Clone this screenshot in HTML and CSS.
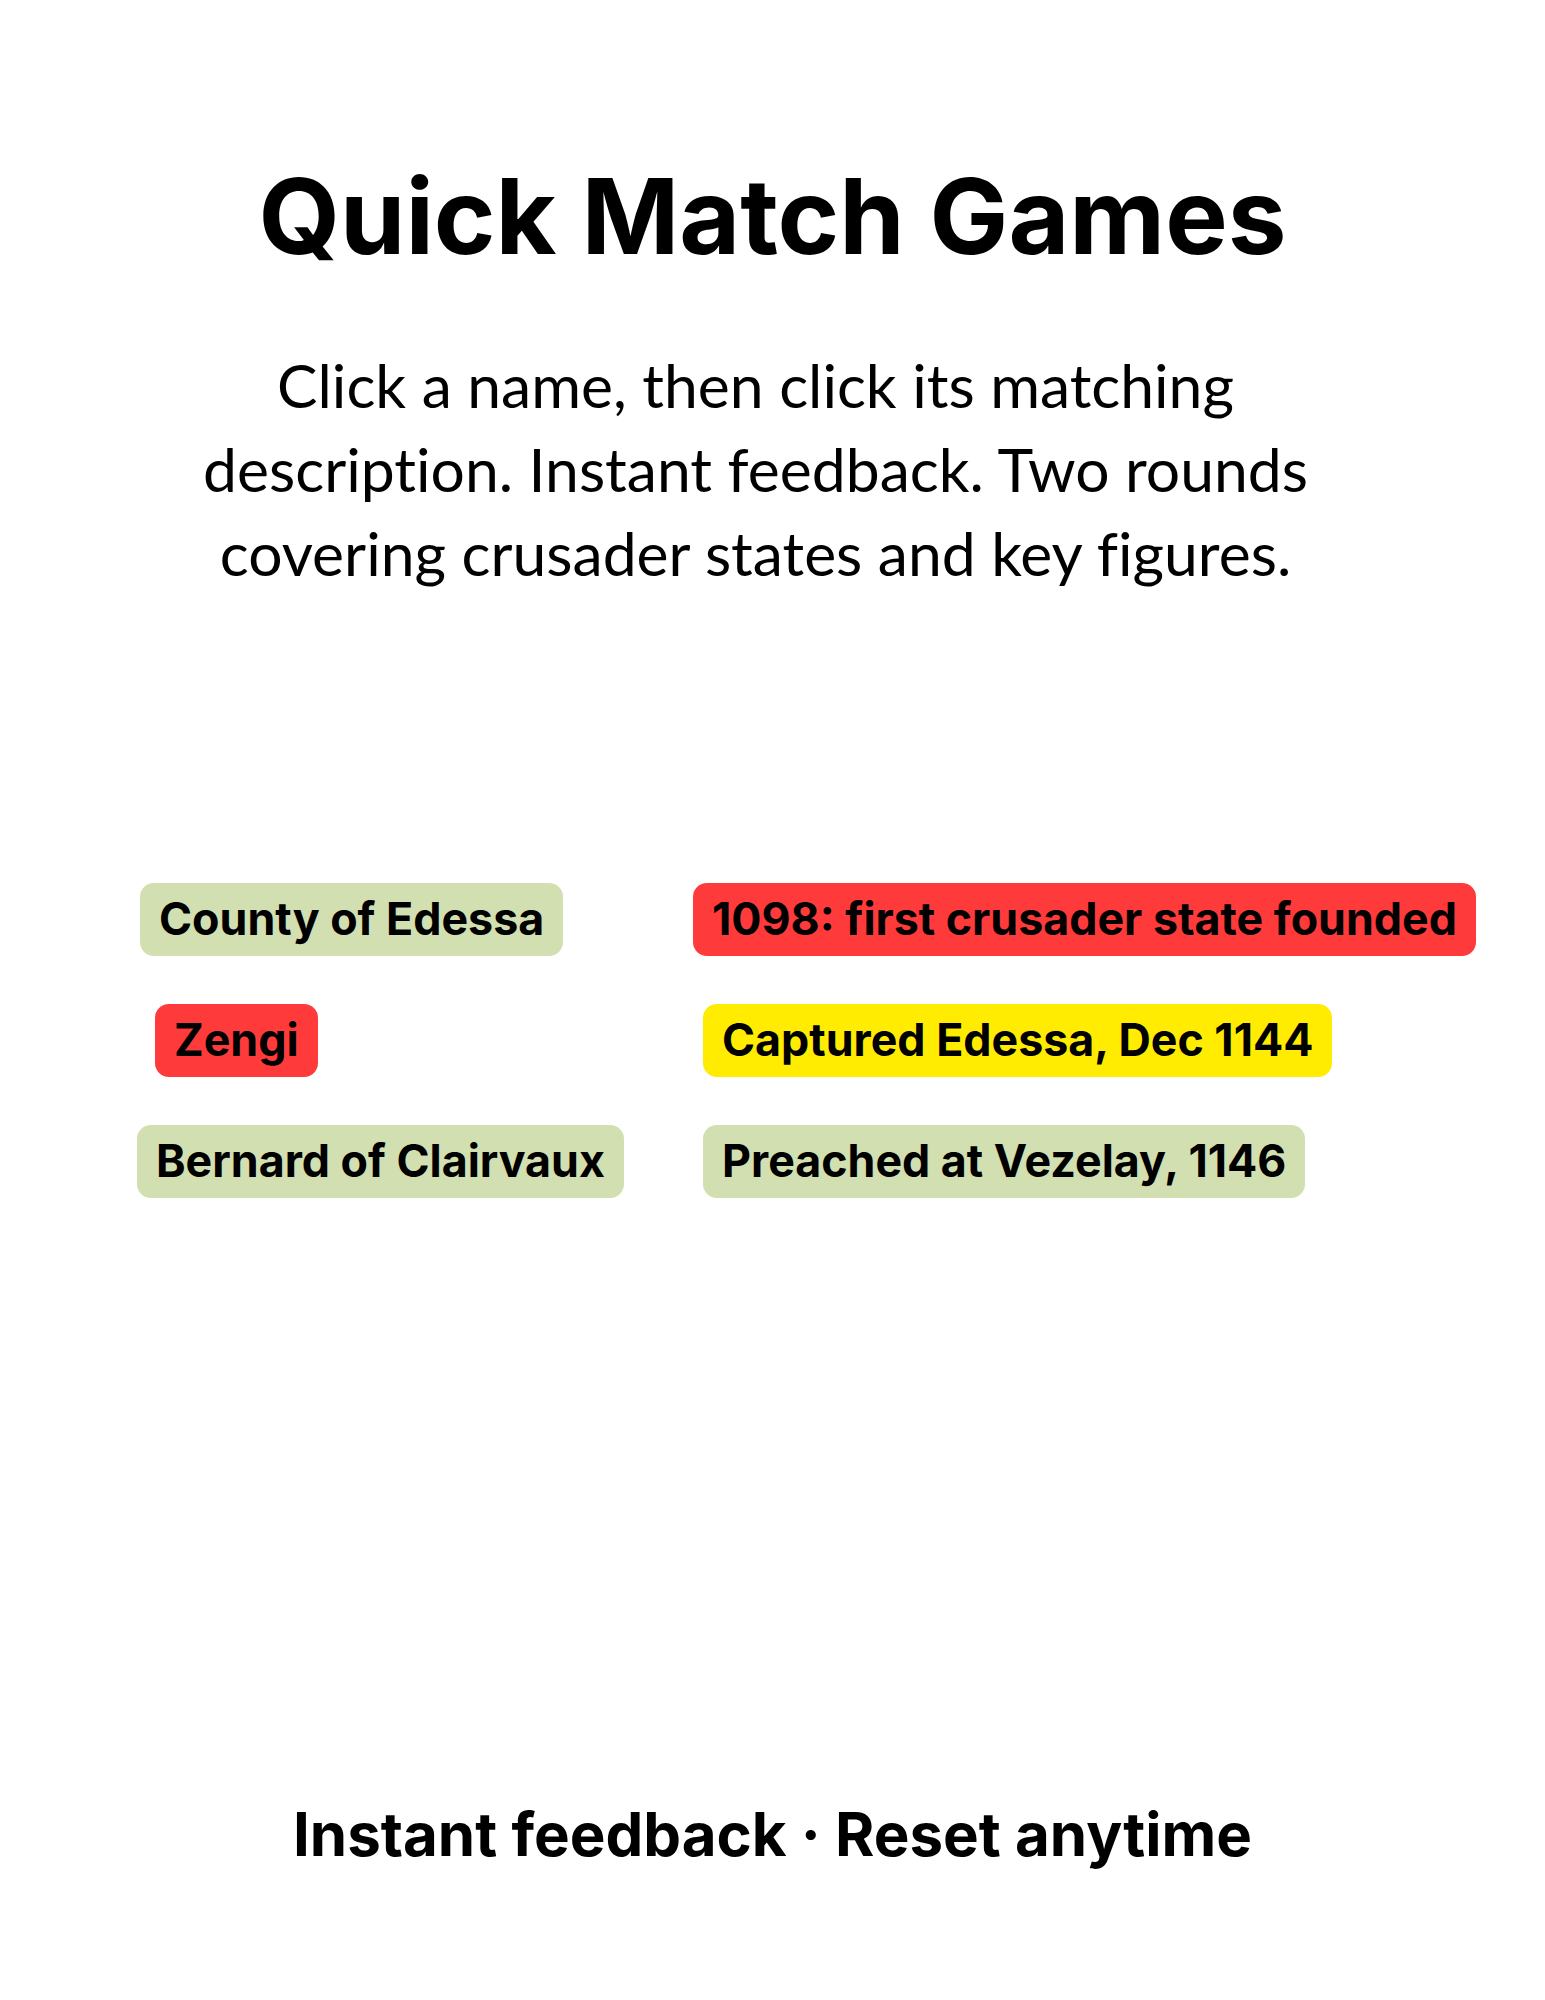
FILE: index.html
```html
<!DOCTYPE html>
<html lang="en">
<head>
    <meta charset="UTF-8">
    <meta name="viewport" content="width=device-width, initial-scale=1.0">
    <title>Quick Match Games</title>
    <link rel="stylesheet" href="styles.css">
</head>
<body>
    <div class="page">
        <h1>Quick Match Games</h1>
        <p class="intro">Click a name, then click its matching description. Instant feedback. Two rounds covering crusader states and key figures.</p>

        <div class="board">
            <button class="chip matched">County of Edessa</button>
            <button class="chip wrong shift-back">1098: first crusader state founded</button>

            <button class="chip wrong shift-far">Zengi</button>
            <button class="chip picked shift-in">Captured Edessa, Dec 1144</button>

            <button class="chip matched shift-out">Bernard of Clairvaux</button>
            <button class="chip matched shift-in">Preached at Vezelay, 1146</button>
        </div>

        <p class="footer">Instant feedback · Reset anytime</p>
    </div>
</body>
</html>
```

FILE: styles.css
```css
body {
    margin: 0;
    background: #fff;
    color: #000;
    font-family: 'Inter', 'Noto Sans', sans-serif;
}
.page {
    display: flex;
    flex-direction: column;
    align-items: center;
    text-align: center;
}
h1 {
    font-size: 105px;
    font-weight: 700;
    line-height: 126px;
    margin: 153px 0 0 0;
}
.intro {
    font-family: 'Lato', sans-serif;
    font-size: 60.6px;
    line-height: 84px;
    font-variant-ligatures: none;
    max-width: 1200px;
    margin: 64px 34px 0 0;
}
.board {
    align-self: stretch;
    display: grid;
    grid-template-columns: 560px auto;
    justify-content: start;
    justify-items: start;
    row-gap: 48px;
    padding-left: 140px;
    margin-top: 288px;
}
.chip {
    font-family: 'Inter', 'Noto Sans', sans-serif;
    font-size: 44.75px;
    font-weight: 700;
    line-height: 55px;
    color: #000;
    padding: 9px 19px;
    border: none;
    border-radius: 14px;
    white-space: nowrap;
    cursor: pointer;
}
.matched {
    background: #d2dfb0;
}
.wrong {
    background: #ff3a3a;
}
.picked {
    background: #ffec00;
}
.shift-far {
    margin-left: 15px;
}
.shift-in {
    margin-left: 3px;
}
.shift-out {
    margin-left: -3px;
}
.shift-back {
    margin-left: -7px;
}
.footer {
    font-size: 60px;
    font-weight: 700;
    line-height: 72px;
    margin: 600px 0 0 0;
}
```
